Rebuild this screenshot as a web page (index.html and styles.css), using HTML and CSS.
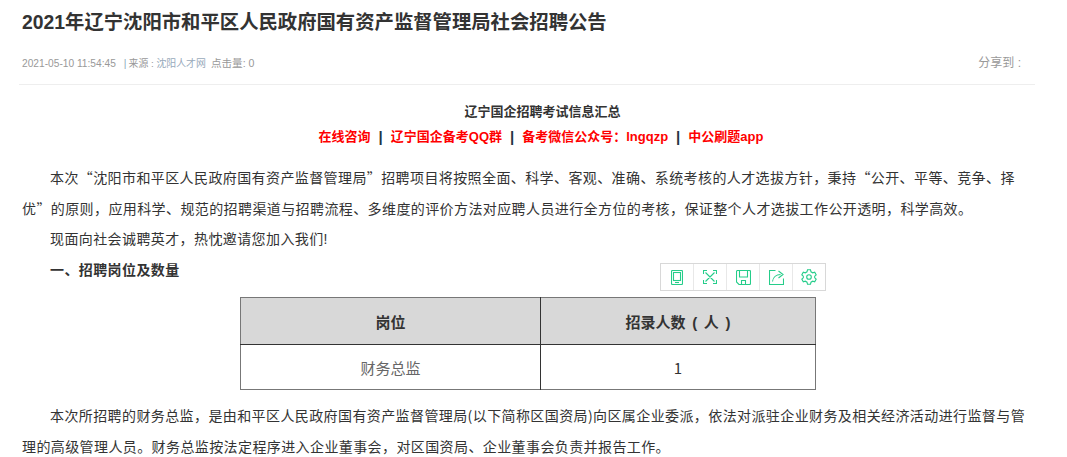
FILE: index.html
```html
<!DOCTYPE html>
<html lang="zh">
<head>
<meta charset="utf-8">
<title>2021年辽宁沈阳市和平区人民政府国有资产监督管理局社会招聘公告</title>
<link rel="stylesheet" href="styles.css">
</head>
<body>
<main class="article">
  <h1 class="title">2021年辽宁沈阳市和平区人民政府国有资产监督管理局社会招聘公告</h1>
  <div class="meta">
    <div class="meta-left"><span>2021-05-10 11:54:45</span><span class="sep">|</span><span class="small">来源 : <span class="source">沈阳人才网</span></span><span class="hits">点击量: 0</span></div>
    <div class="share">分享到 :</div>
  </div>
  <div class="content">
    <p class="center strong heading">辽宁国企招聘考试信息汇总</p>
    <p class="center links"><span>在线咨询</span><b class="bar">|</b><span>辽宁国企备考QQ群</span><b class="bar">|</b><span>备考微信公众号：lngqzp</span><b class="bar">|</b><span>中公刷题app</span></p>
    <p class="indent">本次“沈阳市和平区人民政府国有资产监督管理局”招聘项目将按照全面、科学、客观、准确、系统考核的人才选拔方针，秉持“公开、平等、竞争、择优”的原则，应用科学、规范的招聘渠道与招聘流程、多维度的评价方法对应聘人员进行全方位的考核，保证整个人才选拔工作公开透明，科学高效。</p>
    <p class="indent">现面向社会诚聘英才，热忱邀请您加入我们<span class="latin">!</span></p>
    <p class="indent strong">一、招聘岗位及数量</p>
    <div class="table-wrap">
      <div class="toolbar">
        <span class="tool"><svg viewBox="0 0 12 15" width="12" height="15"><rect x=".5" y=".5" width="11" height="14" rx="1"/><rect x="2.500" y="2.500" width="7" height="8"/><path d="M4 12.500h4"/></svg></span>
        <span class="tool"><svg viewBox="0 0 14 14" width="14" height="14"><path d="M2.500 2.500l9 9M11.500 2.500l-9 9M.5 4V.5H4M10 .5h3.500V4M.5 10v3.500H4M10 13.500h3.500V10"/></svg></span>
        <span class="tool"><svg viewBox="0 0 15 15" width="15" height="15"><path d="M1.500.5h12a1 1 0 0 1 1 1v12a1 1 0 0 1-1 1H3L.5 12V1.500a1 1 0 0 1 1-1zM3.500.5v6.500h8V.5M5.500 14.500v-4h4v4"/></svg></span>
        <span class="tool"><svg viewBox="0 0 15 15" width="15" height="15"><path d="M6.500.5H.5v14h14V8.500M3.500 11.500C4 7 7.500 4.500 11.500 4.500M9.500 1l4.500 3.500-4.500 3.500"/></svg></span>
        <span class="tool"><svg viewBox="0 0 16 16" width="16" height="16"><path d="M6.500.8h3l.5 2 1.700 1 2-.6 1.500 2.700-1.500 1.300v1.600l1.500 1.300-1.500 2.700-2-.6-1.700 1-.5 2h-3l-.5-2-1.700-1-2 .6L.8 10.100l1.500-1.300V7.200L.8 5.900l1.500-2.700 2 .6 1.700-1z"/><circle cx="8" cy="8" r="2.300"/></svg></span>
      </div>
      <table class="jobs">
        <thead><tr><th class="col-a">岗位</th><th class="col-b">招录人数 ( 人 )</th></tr></thead>
        <tbody><tr><td class="col-a">财务总监</td><td class="col-b num">1</td></tr></tbody>
      </table>
    </div>
    <p class="indent">本次所招聘的财务总监，是由和平区人民政府国有资产监督管理局(以下简称区国资局)向区属企业委派，依法对派驻企业财务及相关经济活动进行监督与管理的高级管理人员。财务总监按法定程序进入企业董事会，对区国资局、企业董事会负责并报告工作。</p>
  </div>
</main>
</body>
</html>
```
FILE: styles.css
```css
html, body { margin: 0; padding: 0; background: #fff; overflow: hidden; }
body { font-family: "Noto Sans CJK SC", "Liberation Sans", sans-serif; color: #333; height: 457px; }
.article { width: 1016px; margin-left: 19px; }
.title { margin: 0; padding: 8px 0 0 3px; font: 700 19.350px/28px "Liberation Sans", "Noto Sans CJK SC", sans-serif; color: #333; }
.meta { display: flex; justify-content: space-between; margin-top: 16px; height: 32px; padding: 0 14px 0 3px; border-bottom: 1px solid #eee; font: 10.200px/22px "Liberation Sans", "Noto Sans CJK SC", sans-serif; color: #999; }
.meta-left { display: flex; align-items: baseline; height: 22px; }
.small { font-size: 9.900px; }
.sep { margin: 0 2px 0 8px; color: #8ab; }
.source { color: #9ab; }
.hits { margin-left: 5px; font-size: 10.600px; }
.share { font-size: 12px; color: #999; }
.content { padding: 14px 0 0 3px; font: 14px/30.500px "Noto Sans CJK SC", "Liberation Sans", sans-serif; letter-spacing: .4px; }
.content p { margin: 0; }
.latin { font-family: "Liberation Sans", sans-serif; line-height: 1; }
.center { text-align: center; padding-left: 28px; }
.strong { font-weight: 700; }
.heading { font-size: 13px; line-height: 24px; letter-spacing: 0; }
.links { color: #f00; font: 700 13px/24px "Liberation Sans", "Noto Sans CJK SC", sans-serif; letter-spacing: 0; display: flex; justify-content: center; padding-left: 25px; margin-top: 1.500px !important; margin-bottom: 13.500px !important; }
.bar { color: #234; font-size: 15px; margin: 0 8px; }
.indent { text-indent: 28px; }
.table-wrap { position: relative; padding: 13px 0 10px; }
.toolbar { position: absolute; top: -21px; left: 638px; display: flex; border: 1px solid #d8d8d8; background: #fff; }
.tool { width: 32px; height: 26px; display: flex; align-items: center; justify-content: center; border-left: 1px solid #e8e8e8; }
.tool:first-child { border-left: 0; }
.tool svg { fill: none; stroke: #25cd8a; stroke-width: 1.100; }
.jobs { width: 576px; margin-left: 218px; border: 1px solid #777; border-collapse: collapse; font: 15px "Noto Sans CJK SC", "Liberation Sans", sans-serif; letter-spacing: 0; table-layout: fixed; }
.jobs th, .jobs td { height: 44px; padding: 0; text-align: center; }
.jobs .col-a { width: 299px; }
.jobs .col-b { border-left: 1px solid #333; }
.jobs th { background: #d8d8d8; color: #333; height: 46px; border-bottom: 1px solid #333; font-family: "Liberation Sans", "Noto Sans CJK SC", sans-serif; word-spacing: 2.500px; }
.jobs td { color: #666; }
.jobs .num { color: #333; }
```
